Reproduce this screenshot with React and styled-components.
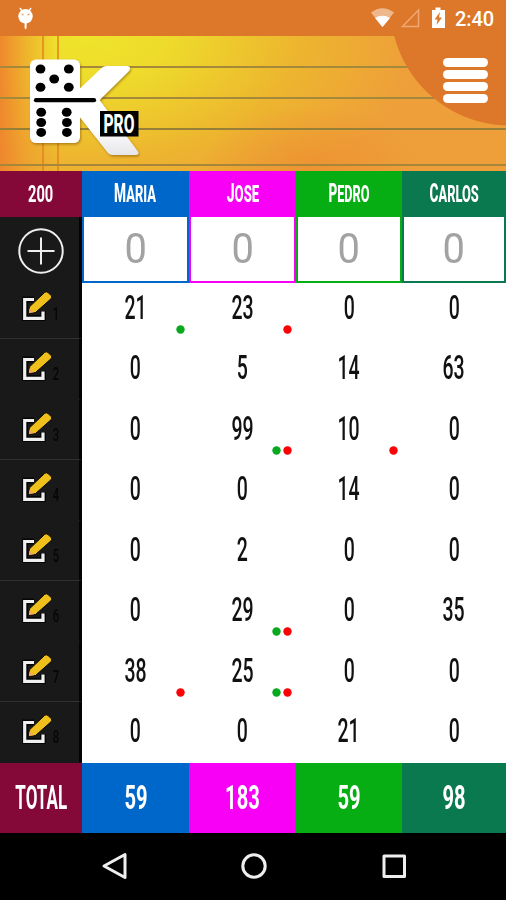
import React from "react";
import styled, { createGlobalStyle } from "styled-components";

const PageStyle = createGlobalStyle`
  * { box-sizing: border-box; }
  body { margin: 0; background: #000; font-family: Roboto, "Liberation Sans", sans-serif; }
`;

const Screen = styled.div`
  width: 506px;
  height: 900px;
  display: flex;
  flex-direction: column;
  overflow: hidden;
`;

const StatusBar = styled.div`
  height: 36px;
  flex: none;
  display: flex;
  align-items: center;
  justify-content: space-between;
  padding: 0 11px 0 17px;
  background: #dd782a;
`;

const StatusGroup = styled.div`
  display: flex;
  align-items: center;
`;

const Clock = styled.span`
  margin-left: 9px;
  width: 40px;
  color: #fff;
  font-size: 20px;
  line-height: 36px;
  font-weight: 500;
  letter-spacing: -0.1px;
  padding-top: 2px;
`;

const Banner = styled.header`
  height: 135px;
  flex: none;
  display: flex;
  justify-content: space-between;
  align-items: flex-start;
  padding: 14px 18px 0 20px;
  background:
    radial-gradient(circle 120px at 510px -30px, #dd782a 99.3%, transparent 100%),
    linear-gradient(#a5893a, #a5893a) 0 30px / 100% 2px no-repeat,
    linear-gradient(#a5893a, #a5893a) 0 61px / 100% 2px no-repeat,
    linear-gradient(#967f37, #967f37) 0 92px / 100% 2px no-repeat,
    linear-gradient(#a5863a, #a5863a) 0 128px / 100% 2px no-repeat,
    linear-gradient(rgba(226, 130, 30, 0.75), rgba(226, 130, 30, 0.75)) 42px 0 / 2px 100% no-repeat,
    linear-gradient(rgba(226, 130, 30, 0.75), rgba(226, 130, 30, 0.75)) 57px 0 / 2px 100% no-repeat,
    linear-gradient(90deg, rgba(239, 132, 45, 0.95), rgba(239, 150, 45, 0.6) 25px, transparent 56px),
    radial-gradient(ellipse 110px 60px at 310px 130px, rgba(236, 142, 48, 0.7), transparent),
    radial-gradient(ellipse 330px 190px at 85px 0, #efe42c, #eedb2b 25%, #edb52f 65%, #ee9f39 100%);
`;

const MenuButton = styled.button`
  display: flex;
  flex-direction: column;
  gap: 3px;
  width: 45px;
  margin-top: 8px;
  padding: 0;
  border: 0;
  background: none;
`;

const MenuBar = styled.span`
  display: block;
  height: 9px;
  border-radius: 5px;
  background: #fff;
`;

const columns = "82px 107px 107px 105.5px 104.5px";

const Condensed = styled.span`
  display: inline-block;
  flex: none;
  white-space: nowrap;
  font-size: ${(p) => p.$size}px;
  font-weight: ${(p) => p.$weight || 500};
  line-height: 1;
  color: ${(p) => p.$color || "#fff"};
  transform: scaleX(${(p) => p.$squeeze});
`;

const NameText = styled(Condensed)`
  &::first-letter { font-size: 25px; }
`;

const HeadRow = styled.div`
  display: grid;
  grid-template-columns: ${columns};
  height: 46px;
  flex: none;
`;

const TotalRow = styled(HeadRow)`
  height: 70px;
`;

const ColorCell = styled.div`
  display: flex;
  align-items: center;
  justify-content: center;
  padding-bottom: 1px;
  background: ${(p) => p.$fill};
`;

const EntryRow = styled.div`
  display: grid;
  grid-template-columns: ${columns};
  height: 66px;
  flex: none;
  position: relative;
  z-index: 1;
`;

const AddCell = styled.button`
  display: flex;
  align-items: center;
  justify-content: center;
  padding: 2px 0 0 2px;
  border: 0;
  border-right: 3px solid #030303;
  background: #191919;
`;

const EntryField = styled.div`
  display: flex;
  align-items: center;
  justify-content: center;
  border: solid ${(p) => p.$edge};
  border-width: 0 2px 2px 2.5px;
  background: #fff;
`;

const Rounds = styled.div`
  height: 484.5px;
  flex: none;
  margin-top: -4.5px;
  display: grid;
  grid-template-rows: repeat(8, 1fr);
  background: #fff;
`;

const Round = styled.div`
  display: grid;
  grid-template-columns: ${columns};
`;

const EditCell = styled.div`
  display: flex;
  align-items: flex-start;
  padding: 11px 0 0 20px;
  background: #191919;
  border-right: 3px solid #030303;
  border-bottom: 1px solid ${(p) => (p.$ruled ? "#303030" : "#191919")};
`;

const RoundNumber = styled.span`
  margin: 15px 0 0 -4px;
  width: 12px;
  text-align: center;
  font-size: 18px;
  font-weight: 500;
  line-height: 18px;
  color: #060606;
  transform: scaleX(0.62);
`;

const Score = styled.div`
  position: relative;
  display: flex;
  justify-content: center;
  padding-top: 13px;
`;

const Marks = styled.div`
  position: absolute;
  right: ${(p) => p.$inset}px;
  top: 46px;
  display: flex;
  gap: 3px;
`;

const Mark = styled.svg`
  display: block;
  width: 9px;
  height: 9px;
  margin: 0 -0.25px;
  fill: ${(p) => p.$tone};
`;

const NavBar = styled.nav`
  flex: 1;
  display: flex;
  justify-content: center;
  gap: 112px;
  padding: 19px 0 0 1px;
  background: #000;
`;

const Robot = () => (
  <svg width="17" height="24" viewBox="0 0 17 24">
    <path d="M3 2l2 3M14 2l-2 3" stroke="#fff" strokeWidth="1.4" />
    <circle cx="8.5" cy="10.3" r="7.2" fill="#fff" />
    <circle cx="5.6" cy="8.5" r="1.1" fill="#e8ab7c" />
    <circle cx="11.6" cy="8.5" r="1.1" fill="#e8ab7c" />
    <path d="M7.6 16h2v6l-1 1.5-1-1.5z" fill="#fff" />
  </svg>
);

const Signals = () => (
  <svg width="76" height="24" viewBox="0 0 76 24">
    <path d="M1 6.500Q12.500 -2 24 6.500L12.500 21z" fill="#eeb88c" />
    <path d="M5 12Q12.500 7.500 20 12L12.500 21z" fill="#fff" />
    <path d="M32.500 20.500L48.500 4v16.500z" fill="none" stroke="#efa875" strokeWidth="1.5" />
    <path d="M62 4h3.500V1.500h5V4H75v18H62z" fill="#fff" />
    <path d="M70 6l-5.500 7.500h3L66.500 19l5.500-7.500h-3z" fill="#dd782a" />
  </svg>
);

const Logo = () => (
  <svg width="124" height="112" viewBox="20 50 124 112" style={{ overflow: "visible" }}>
    <defs>
      <filter id="logoShade" x="-10%" y="-10%" width="125%" height="125%">
        <feDropShadow dx="1" dy="1.500" stdDeviation="1.300" floodColor="#704000" floodOpacity="0.5" />
      </filter>
      <linearGradient id="legShade" x1="0" y1="0" x2="0" y2="1">
        <stop offset="0.7" stopColor="#fff" />
        <stop offset="1" stopColor="#e6e6ea" />
      </linearGradient>
    </defs>
    <g filter="url(#logoShade)" fill="url(#legShade)">
      <path d="M79 89.500L101.500 68Q103.500 66 107 66H127Q132.500 66.500 128.500 71.500L99.500 100 137.500 151Q140 154.500 136 155H113Q109 155 106.500 151L79 116z" />
      <rect x="30" y="59.500" width="50" height="83.500" rx="6" fill="#fff" />
    </g>
    <path d="M36 100.200H94" stroke="#000" strokeWidth="4.300" strokeLinecap="round" />
    {[[40.5, 69], [68.8, 69], [54.2, 79], [40.5, 87.3], [68.8, 87.3], [41.2, 112.3], [66.7, 112.3], [41.2, 122.5], [66.9, 122.5], [41.2, 132.4], [66.9, 132.4]].map(([x, y]) => (
      <ellipse key={`${x}-${y}`} cx={x} cy={y} rx="4.900" ry="4.500" />
    ))}
    <rect x="100" y="111" width="38.500" height="25.500" />
    <text x="103.500" y="133.300" fontSize="26" fontWeight="800" fontFamily="Roboto, sans-serif" fill="#fff" textLength="31" lengthAdjust="spacingAndGlyphs">PRO</text>
  </svg>
);

const Plus = () => (
  <svg width="46" height="46" viewBox="0 0 46 46" fill="none" stroke="#eee" strokeWidth="2">
    <circle cx="23" cy="23" r="21.700" />
    <path d="M23 9.500v27M9.500 23h27" />
  </svg>
);

const Pencil = () => (
  <svg width="34" height="34" viewBox="0 0 34 34">
    <path d="M14 9.500H5v18.500h18V21" fill="none" stroke="#060606" strokeWidth="6" />
    <path d="M14 9.500H4.700v18.800h18.300V21.500" fill="none" stroke="#f0f0f0" strokeWidth="3.200" />
    <path d="M8.300 23.500L9.500 16.800 24.500 2.500Q26.200 1 28 2.500L31.300 5.600Q32.500 7.300 31 8.800L15.500 22.500z" fill="#efc01c" stroke="#060606" strokeWidth="1" />
    <path d="M8.800 23L9.600 18.300 14.200 22.300z" fill="#f5a85c" />
  </svg>
);

const players = [
  { name: "MARIA", fill: "#0067ca", total: "59", squeeze: 0.55 },
  { name: "JOSE", fill: "#f800f5", total: "183", squeeze: 0.56 },
  { name: "PEDRO", fill: "#06ad13", total: "59", squeeze: 0.54 },
  { name: "CARLOS", fill: "#0b7950", total: "98", squeeze: 0.545 },
];

const GREEN = "#08a91f";
const RED = "#fb0207";

const rounds = [
  [[21, GREEN], [23, RED], [0], [0]],
  [[0], [5], [14], [63]],
  [[0], [99, GREEN, RED], [10, RED], [0]],
  [[0], [0], [14], [0]],
  [[0], [2], [0], [0]],
  [[0], [29, GREEN, RED], [0], [35]],
  [[38, RED], [25, GREEN, RED], [0], [0]],
  [[0], [0], [21], [0]],
];

export default function App() {
  return (
    <Screen>
      <PageStyle />
      <StatusBar>
        <Robot />
        <StatusGroup>
          <Signals />
          <Clock>2:40</Clock>
        </StatusGroup>
      </StatusBar>
      <Banner>
        <Logo />
        <MenuButton aria-label="Menu">
          <MenuBar />
          <MenuBar />
          <MenuBar />
          <MenuBar />
        </MenuButton>
      </Banner>
      <HeadRow>
        <ColorCell $fill="#850938">
          <Condensed $size={24} $weight={700} $squeeze={0.61}>200</Condensed>
        </ColorCell>
        {players.map((p) => (
          <ColorCell key={p.name} $fill={p.fill}>
            <NameText $size={23.5} $weight={800} $squeeze={p.squeeze}>{p.name}</NameText>
          </ColorCell>
        ))}
      </HeadRow>
      <EntryRow>
        <AddCell aria-label="Add round"><Plus /></AddCell>
        {players.map((p) => (
          <EntryField key={p.name} $edge={p.fill}>
            <Condensed $size={42} $weight={400} $color="#a2a2a2" $squeeze={0.95}>0</Condensed>
          </EntryField>
        ))}
      </EntryRow>
      <Rounds>
        {rounds.map((scores, i) => (
          <Round key={i}>
            <EditCell $ruled={i % 2 === 0}>
              <Pencil />
              <RoundNumber>{i + 1}</RoundNumber>
            </EditCell>
            {scores.map(([value, ...marks], c) => (
              <Score key={c}>
                <Condensed $size={32.5} $color="#111" $squeeze={0.6}>{value}</Condensed>
                {marks.length > 0 && (
                  <Marks $inset={4.2}>
                    {marks.map((tone) => (
                      <Mark key={tone} $tone={tone} viewBox="0 0 9 9"><circle cx="4.5" cy="4.5" r="4.2" /></Mark>
                    ))}
                  </Marks>
                )}
              </Score>
            ))}
          </Round>
        ))}
      </Rounds>
      <TotalRow>
        <ColorCell $fill="#850938">
          <Condensed $size={33} $weight={700} $squeeze={0.515}>TOTAL</Condensed>
        </ColorCell>
        {players.map((p) => (
          <ColorCell key={p.name} $fill={p.fill}>
            <Condensed $size={33} $weight={700} $squeeze={0.61}>{p.total}</Condensed>
          </ColorCell>
        ))}
      </TotalRow>
      <NavBar>
        <svg width="28" height="28" viewBox="0 0 28 28" fill="none" stroke="#eee" strokeWidth="3" strokeLinejoin="round">
          <path d="M25 2.500v23L4 14z" />
        </svg>
        <svg width="28" height="28" viewBox="0 0 28 28" fill="none" stroke="#eee" strokeWidth="3">
          <circle cx="14" cy="14" r="11.200" />
        </svg>
        <svg width="28" height="28" viewBox="0 0 28 28" fill="none" stroke="#eee" strokeWidth="3" strokeLinejoin="round">
          <rect x="4" y="4" width="20.500" height="20.500" />
        </svg>
      </NavBar>
    </Screen>
  );
}
